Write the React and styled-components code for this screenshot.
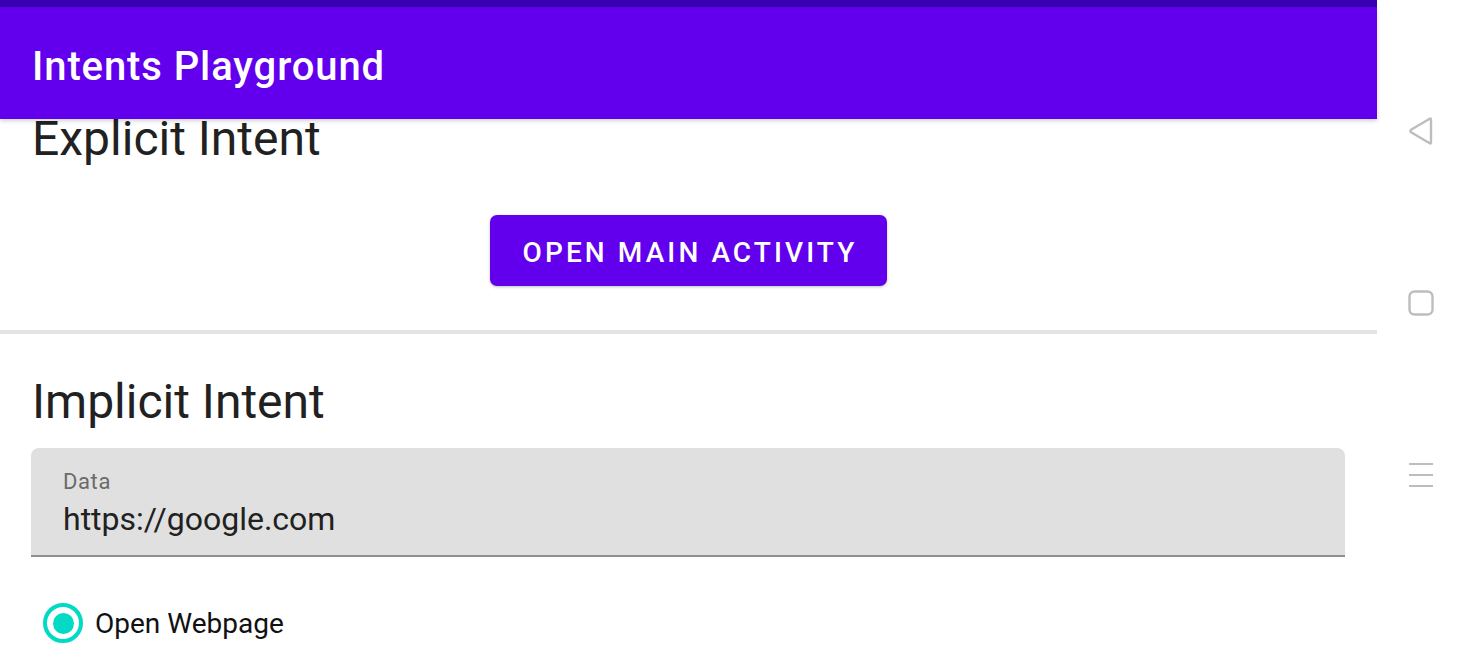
import React from 'react'
import styled, { createGlobalStyle } from 'styled-components'

const GlobalStyle = createGlobalStyle`
  html, body {
    margin: 0;
    padding: 0;
    background: #fff;
    overflow: hidden;
  }

  body {
    font-family: Roboto, 'Noto Sans', sans-serif;
  }
`

const Screen = styled.div`
  display: flex;
  width: 1464px;
  height: 663px;
  overflow: hidden;
`

const AppArea = styled.div`
  width: 1377px;
  display: flex;
  flex-direction: column;
  background: #fff;
`

const StatusBar = styled.div`
  height: 7px;
  background: #3700b3;
`

const AppBar = styled.header`
  height: 112px;
  background: #6200ee;
  display: flex;
  align-items: center;
  padding: 0 32px;
  box-shadow: 0 2px 4px rgba(0, 0, 0, 0.18);
  position: relative;
  z-index: 1;

  h1 {
    margin: 0;
    color: #fff;
    font-family: Roboto, sans-serif;
    font-size: 40px;
    font-weight: 500;
    letter-spacing: 0.9px;
    padding-top: 6px;
  }
`

const Content = styled.main`
  display: flex;
  flex-direction: column;
`

const Section = styled.section`
  display: flex;
  flex-direction: column;
  padding: ${p => p.$pad || '0 32px'};
`

const Heading = styled.h2`
  margin: 0;
  font-family: Roboto, sans-serif;
  font-size: 48px;
  font-weight: 400;
  line-height: 40px;
  color: #212121;
`

const PrimaryButton = styled.button`
  align-self: center;
  margin-top: 56px;
  height: 71px;
  padding: 3px 30px 0 33px;
  border: none;
  border-radius: 7px;
  background: #6200ee;
  color: #fff;
  font-family: Roboto, sans-serif;
  font-size: 28px;
  font-weight: 500;
  letter-spacing: 3.1px;
  text-transform: uppercase;
  box-shadow: 0 1px 3px rgba(0, 0, 0, 0.25);
`

const Divider = styled.hr`
  margin: 44px 0 0;
  border: none;
  height: 4px;
  background: #e4e4e4;
`

const TextField = styled.div`
  margin-top: 26px;
  margin-left: -1px;
  background: #e0e0e0;
  border-radius: 8px 8px 0 0;
  border-bottom: 2px solid #8e8e8e;
  padding: 22px 32px 0;
  height: 85px;
  display: flex;
  flex-direction: column;

  label {
    font-family: Roboto, sans-serif;
    font-size: 22px;
    color: #6b6b6b;
    letter-spacing: 0.6px;
    line-height: 24px;
  }

  input {
    margin-top: 5px;
    border: none;
    background: transparent;
    padding: 0;
    font-family: Roboto, sans-serif;
    font-size: 32px;
    color: #212121;
    outline: none;
    line-height: 40px;
  }
`

const RadioRow = styled.label`
  display: flex;
  align-items: center;
  gap: 12px;
  margin-top: 46px;
  padding-left: 11px;
  font-family: Roboto, sans-serif;
  font-size: 28px;
  color: #111;
`

const RadioCircle = styled.span`
  width: 32px;
  height: 32px;
  border-radius: 50%;
  border: 4px solid #03dac5;
  display: flex;
  align-items: center;
  justify-content: center;

  &::after {
    content: '';
    width: 21px;
    height: 21px;
    border-radius: 50%;
    background: #03dac5;
  }
`

const NavBar = styled.nav`
  flex: 1;
  display: flex;
  flex-direction: column;
  align-items: center;
  padding-top: 116px;
  gap: 142px;
  background: #fff;
`

const NavIcon = styled.svg`
  width: 30px;
  height: 30px;
  color: #bdbdbd;
`

export default function App() {
  return (
    <Screen>
      <GlobalStyle />
      <AppArea>
        <StatusBar />
        <AppBar>
          <h1>Intents Playground</h1>
        </AppBar>
        <Content>
          <Section>
            <Heading>Explicit Intent</Heading>
            <PrimaryButton>Open Main Activity</PrimaryButton>
          </Section>
          <Divider />
          <Section $pad="48px 32px 0">
            <Heading>Implicit Intent</Heading>
            <TextField>
              <label>Data</label>
              <input defaultValue="https://google.com" />
            </TextField>
            <RadioRow>
              <RadioCircle />
              Open Webpage
            </RadioRow>
          </Section>
        </Content>
      </AppArea>
      <NavBar>
        <NavIcon viewBox="0 0 30 30" fill="none" stroke="currentColor" strokeWidth="2.4" strokeLinejoin="round">
          <path d="M25 3.5 L25 26.5 Q25 28 23.7 27.2 L5 16.2 Q3.8 15 5 13.8 L23.7 2.8 Q25 2 25 3.5 Z" />
        </NavIcon>
        <NavIcon viewBox="0 0 30 30" fill="none" stroke="currentColor" strokeWidth="2.4">
          <rect x="3.5" y="3.5" width="23" height="23" rx="5" />
        </NavIcon>
        <NavIcon viewBox="0 0 30 30" fill="none" stroke="currentColor" strokeWidth="2.2">
          <path d="M3 4 H27 M3 15 H27 M3 26 H27" />
        </NavIcon>
      </NavBar>
    </Screen>
  )
}
